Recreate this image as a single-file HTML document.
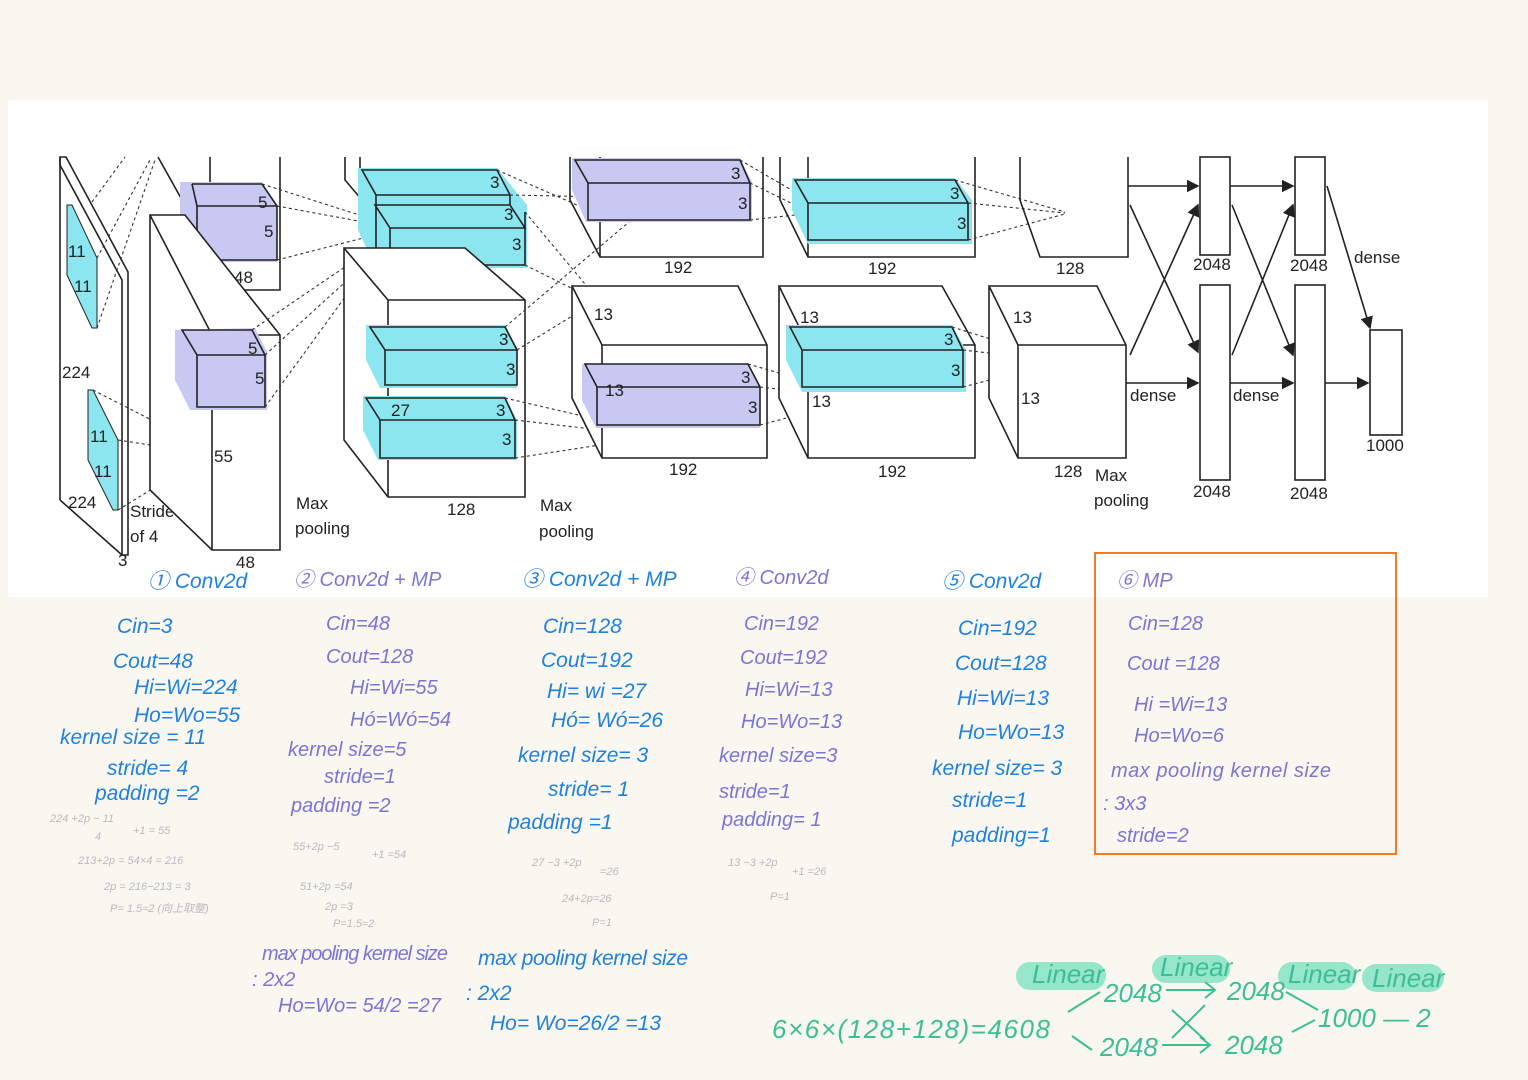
<!DOCTYPE html>
<html><head><meta charset="utf-8"><style>
html,body{margin:0;padding:0;background:#faf6f0;}
svg{display:block}
.k{stroke:#222;stroke-width:1.6;fill:none}
.kw{stroke:#222;stroke-width:1.6;fill:#fff}
.d{stroke:#333;stroke-width:1.1;stroke-dasharray:3 3;fill:none}
.t{font-family:"Liberation Sans",sans-serif;font-size:17px;fill:#222}
.h{font-family:"Liberation Sans","Noto Sans CJK SC",sans-serif;font-style:italic}
.b{fill:#1e82de;font-size:21px}
.p{fill:#7a76d6;font-size:20px}
.g{fill:#bdb8c0;font-size:11px}
.gr{fill:#3cbf95;font-size:26px}
.lv{fill:#c9c8f3}
.cy{fill:#8ce6f0}
</style></head><body>
<svg width="1528" height="1080" viewBox="0 0 1528 1080" xmlns="http://www.w3.org/2000/svg">
<defs><marker id="ar" markerWidth="8" markerHeight="8" refX="7" refY="4" orient="auto"><path d="M0,0 L8,4 L0,8 Z" fill="#222"/></marker></defs>
<rect x="8" y="100" width="1480" height="497" fill="#fff"/>

<polygon points="60,157 66,157 128,272 128,555 122,555 122,280 60,165" class="kw"/>
<line x1="60" y1="157" x2="60" y2="500" class="k"/>
<line x1="60" y1="500" x2="122" y2="555" class="k"/>
<polygon points="67,205 72,205 97,258 97,328 92,328 67,275" class="cy" stroke="#222"/>
<polygon points="88,390 93,390 118,440 118,510 113,510 88,460" class="cy" stroke="#222"/>
<text x="68" y="257" class="t">11</text><text x="74" y="292" class="t">11</text>
<text x="62" y="378" class="t">224</text><text x="68" y="508" class="t">224</text>
<text x="90" y="442" class="t">11</text><text x="94" y="477" class="t">11</text>
<text x="118" y="566" class="t">3</text>
<text x="130" y="517" class="t" font-size="19">Stride</text><text x="130" y="542" class="t" font-size="19">of 4</text>
<path d="M92,202 L125,157 M97,258 L150,160 M97,328 L155,160 M118,440 L215,455 M118,510 L212,452 M93,390 L210,450" class="d"/>

<path d="M158,157 L210,250 M210,157 L210,290 L280,290 L280,157" class="k"/>
<polygon points="180,182 262,182 277,206 277,262 197,262 180,235" class="lv"/>
<path d="M192,184 L262,184 L277,206 L197,206 L192,184 M197,206 L197,260 L277,260 L277,206" class="k"/>
<text x="258" y="208" class="t">5</text><text x="264" y="237" class="t">5</text><text x="234" y="283" class="t">48</text>
<text x="198" y="308" class="t">55</text>
<polygon points="150,215 185,215 280,335 280,550 212,550 150,490" class="kw"/>
<path d="M150,215 L212,335 L280,335 M212,335 L212,550" class="k"/>
<polygon points="175,330 255,328 267,352 267,410 190,410 175,380" class="lv"/>
<path d="M182,330 L252,330 L265,355 L197,355 Z M197,355 L197,407 L265,407 L265,355" class="k"/>
<text x="248" y="354" class="t">5</text><text x="255" y="384" class="t">5</text>
<text x="214" y="462" class="t">55</text><text x="236" y="568" class="t">48</text>
<path d="M262,184 L375,220 M277,206 L380,225 M277,260 L375,235 M252,330 L370,250 M265,355 L375,255 M265,407 L372,260" class="d"/>
<text x="296" y="509" class="t" font-size="19">Max</text><text x="295" y="534" class="t" font-size="19">pooling</text>

<path d="M345,157 L345,180 L362,200 M360,157 L360,170" class="k"/>
<polygon points="358,168 497,168 527,205 527,268 376,268 358,230" class="cy"/>
<path d="M362,170 L497,170 L510,195 L376,195 Z M376,195 L376,265 L525,265 L525,212 M375,205 L510,205 L525,228 L390,228 Z M390,228 L390,263 M510,195 L510,205" class="k"/>
<text x="490" y="188" class="t">3</text><text x="504" y="220" class="t">3</text><text x="512" y="250" class="t">3</text>
<text x="374" y="301" class="t">27</text><text x="432" y="293" class="t">128</text>
<polygon points="344,248 465,248 525,300 525,497 388,497 344,440" class="kw"/>
<path d="M344,248 L388,300 L525,300 M388,300 L388,497" class="k"/>
<polygon points="366,325 505,325 517,348 517,388 380,388 366,360" class="cy"/>
<path d="M370,327 L505,327 L517,350 L385,350 Z M385,350 L385,385 L517,385 L517,350" class="k"/>
<text x="499" y="345" class="t">3</text><text x="506" y="375" class="t">3</text>
<polygon points="363,396 505,396 517,420 517,460 378,460 363,430" class="cy"/>
<path d="M366,398 L505,398 L515,420 L380,420 Z M380,420 L380,458 L515,458 L515,420" class="k"/>
<text x="391" y="416" class="t">27</text><text x="496" y="416" class="t">3</text><text x="502" y="445" class="t">3</text>
<text x="447" y="515" class="t">128</text>
<text x="540" y="511" class="t" font-size="19">Max</text><text x="539" y="537" class="t" font-size="19">pooling</text>
<path d="M497,170 L600,215 M510,195 L655,198 M525,212 L590,290 M505,327 L655,200 M517,350 L598,300 M505,398 L600,420 M515,420 L600,430 M515,458 L600,445 M525,265 L720,362" class="d"/>

<path d="M570,157 L570,200 L600,257 L763,257 L763,157 M600,157 L600,257" class="k"/>
<polygon points="572,158 740,158 752,182 752,222 586,222 572,190" class="lv"/>
<path d="M575,160 L740,160 L750,183 L588,183 Z M588,183 L588,220 L750,220 L750,183" class="k"/>
<text x="731" y="179" class="t">3</text><text x="738" y="209" class="t">3</text>
<text x="664" y="273" class="t">192</text>
<polygon points="572,286 738,286 767,345 767,458 602,458 572,398" class="kw"/>
<path d="M572,286 L602,345 L767,345 M602,345 L602,458" class="k"/>
<polygon points="582,364 748,364 760,386 760,428 596,428 582,400" class="lv"/>
<path d="M585,364 L748,364 L760,387 L597,387 Z M597,387 L597,425 L760,425 L760,387" class="k"/>
<text x="594" y="320" class="t">13</text><text x="605" y="396" class="t">13</text>
<text x="741" y="383" class="t">3</text><text x="748" y="413" class="t">3</text>
<text x="669" y="475" class="t">192</text>
<path d="M740,160 L795,192 M750,183 L795,205 M750,220 L795,215 M748,364 L855,395 M760,387 L855,398 M760,425 L855,400" class="d"/>

<path d="M780,157 L780,200 L808,257 L975,257 L975,157 M808,157 L808,257" class="k"/>
<polygon points="792,178 955,178 972,200 972,244 808,244 792,210" class="cy"/>
<path d="M795,180 L955,180 L968,203 L808,203 Z M808,203 L808,240 L968,240 L968,203" class="k"/>
<text x="950" y="199" class="t">3</text><text x="957" y="229" class="t">3</text>
<text x="868" y="274" class="t">192</text>
<polygon points="779,286 942,286 975,345 975,458 808,458 779,398" class="kw"/>
<path d="M779,286 L808,345 L975,345 M808,345 L808,458" class="k"/>
<polygon points="786,325 952,325 966,350 966,392 802,392 786,360" class="cy"/>
<path d="M790,327 L952,327 L963,350 L802,350 Z M802,350 L802,387 L963,387 L963,350" class="k"/>
<text x="800" y="323" class="t">13</text><text x="944" y="345" class="t">3</text><text x="951" y="376" class="t">3</text>
<text x="812" y="407" class="t">13</text>
<text x="878" y="477" class="t">192</text>
<path d="M955,180 L1065,212 M968,203 L1065,213 M968,240 L1065,214 M952,327 L1058,360 M963,350 L1058,361 M963,387 L1058,362" class="d"/>

<path d="M1020,157 L1020,200 L1040,257 L1128,257 L1128,157" class="k"/>
<text x="1056" y="274" class="t">128</text>
<polygon points="989,286 1097,286 1126,345 1126,458 1018,458 989,398" class="kw"/>
<path d="M989,286 L1018,345 L1126,345 M1018,345 L1018,458" class="k"/>
<text x="1013" y="323" class="t">13</text><text x="1021" y="404" class="t">13</text>
<text x="1054" y="477" class="t">128</text>
<text x="1095" y="481" class="t" font-size="19">Max</text><text x="1094" y="506" class="t" font-size="19">pooling</text>

<rect x="1200" y="157" width="30" height="98" class="kw"/>
<rect x="1200" y="285" width="30" height="195" class="kw"/>
<rect x="1295" y="157" width="30" height="98" class="kw"/>
<rect x="1295" y="285" width="30" height="195" class="kw"/>
<rect x="1370" y="330" width="32" height="105" class="kw"/>
<g class="k" stroke-width="1.3" marker-end="url(#ar)">
<path d="M1128,186 L1198,186"/><path d="M1126,383 L1198,383"/><path d="M1230,186 L1293,186"/><path d="M1230,383 L1293,383"/><path d="M1325,383 L1368,383"/><path d="M1130,205 L1198,352"/><path d="M1130,355 L1198,205"/><path d="M1232,205 L1293,355"/><path d="M1232,355 L1293,205"/><path d="M1327,186 L1370,328"/>
</g>
<text x="1193" y="270" class="t">2048</text><text x="1290" y="271" class="t">2048</text>
<text x="1193" y="497" class="t">2048</text><text x="1290" y="499" class="t">2048</text>
<text x="1366" y="451" class="t">1000</text>
<text x="1354" y="263" class="t" font-size="19">dense</text>
<text x="1130" y="401" class="t" font-size="19">dense</text><text x="1233" y="401" class="t" font-size="19">dense</text>

<g class="h">
<text x="148" y="588" class="b">① Conv2d</text>
<text x="294" y="586" class="p">② Conv2d + MP</text>
<text x="522" y="586" class="b">③ Conv2d + MP</text>
<text x="734" y="584" class="p">④ Conv2d</text>
<text x="942" y="588" class="b">⑤ Conv2d</text>
<text x="1117" y="587" class="p">⑥ MP</text>

<text x="117" y="633" class="b">Cin=3</text>
<text x="113" y="668" class="b">Cout=48</text>
<text x="134" y="694" class="b">Hi=Wi=224</text>
<text x="134" y="722" class="b">Ho=Wo=55</text>
<text x="60" y="744" class="b">kernel size = 11</text>
<text x="107" y="775" class="b">stride= 4</text>
<text x="95" y="800" class="b">padding =2</text>
<text x="50" y="822" class="g">224 +2p − 11</text><text x="95" y="840" class="g">4</text><text x="133" y="834" class="g">+1 = 55</text>
<text x="78" y="864" class="g">213+2p = 54×4 = 216</text>
<text x="104" y="890" class="g">2p = 216−213 = 3</text>
<text x="110" y="912" class="g">P= 1.5≈2 (向上取整)</text>

<text x="326" y="630" class="p">Cin=48</text>
<text x="326" y="663" class="p">Cout=128</text>
<text x="350" y="694" class="p">Hi=Wi=55</text>
<text x="350" y="726" class="p">Hó=Wó=54</text>
<text x="288" y="756" class="p">kernel size=5</text>
<text x="324" y="783" class="p">stride=1</text>
<text x="291" y="812" class="p">padding =2</text>
<text x="293" y="850" class="g" font-size="13">55+2p −5</text><text x="372" y="858" class="g" font-size="13">+1 =54</text>
<text x="300" y="890" class="g">51+2p =54</text><text x="325" y="910" class="g">2p =3</text><text x="333" y="927" class="g">P=1.5≈2</text>

<text x="543" y="633" class="b">Cin=128</text>
<text x="541" y="667" class="b">Cout=192</text>
<text x="547" y="698" class="b">Hi= wi =27</text>
<text x="551" y="727" class="b">Hó= Wó=26</text>
<text x="518" y="762" class="b">kernel size= 3</text>
<text x="548" y="796" class="b">stride= 1</text>
<text x="508" y="829" class="b">padding =1</text>
<text x="532" y="866" class="g" font-size="13">27 −3 +2p</text><text x="600" y="875" class="g" font-size="13">=26</text>
<text x="562" y="902" class="g">24+2p=26</text><text x="592" y="926" class="g">P=1</text>

<text x="744" y="630" class="p">Cin=192</text>
<text x="740" y="664" class="p">Cout=192</text>
<text x="745" y="696" class="p">Hi=Wi=13</text>
<text x="741" y="728" class="p">Ho=Wo=13</text>
<text x="719" y="762" class="p">kernel size=3</text>
<text x="719" y="798" class="p">stride=1</text>
<text x="722" y="826" class="p">padding= 1</text>
<text x="728" y="866" class="g" font-size="13">13 −3 +2p</text><text x="792" y="875" class="g">+1 =26</text>
<text x="770" y="900" class="g">P=1</text>

<text x="958" y="635" class="b">Cin=192</text>
<text x="955" y="670" class="b">Cout=128</text>
<text x="957" y="705" class="b">Hi=Wi=13</text>
<text x="958" y="739" class="b">Ho=Wo=13</text>
<text x="932" y="775" class="b">kernel size= 3</text>
<text x="952" y="807" class="b">stride=1</text>
<text x="952" y="842" class="b">padding=1</text>

<text x="1128" y="630" class="p">Cin=128</text>
<text x="1127" y="670" class="p">Cout =128</text>
<text x="1134" y="711" class="p">Hi =Wi=13</text>
<text x="1134" y="742" class="p">Ho=Wo=6</text>
<text x="1111" y="777" class="p" textLength="220">max pooling kernel size</text>
<text x="1103" y="810" class="p">: 3x3</text>
<text x="1117" y="842" class="p">stride=2</text>

<text x="262" y="960" class="p" font-size="17" textLength="186">max pooling kernel size</text>
<text x="252" y="986" class="p" font-size="17">: 2x2</text>
<text x="278" y="1012" class="p" font-size="19">Ho=Wo= 54/2 =27</text>
<text x="478" y="965" class="b" font-size="17" textLength="210">max pooling kernel size</text>
<text x="466" y="1000" class="b" font-size="18">: 2x2</text>
<text x="490" y="1030" class="b" font-size="18">Ho= Wo=26/2 =13</text>

<rect x="1016" y="962" width="90" height="28" rx="14" fill="#96e6cc"/>
<rect x="1152" y="955" width="78" height="28" rx="14" fill="#96e6cc"/>
<rect x="1278" y="962" width="78" height="28" rx="14" fill="#96e6cc"/>
<rect x="1362" y="964" width="82" height="28" rx="14" fill="#96e6cc"/>
<text x="1032" y="983" class="gr" font-size="19" fill="#2fae84">Linear</text>
<text x="1160" y="976" class="gr" font-size="19" fill="#2fae84">Linear</text>
<text x="1288" y="983" class="gr" font-size="19" fill="#2fae84">Linear</text>
<text x="1372" y="987" class="gr" font-size="19" fill="#2fae84">Linear</text>
<text x="772" y="1038" class="gr" textLength="278">6×6×(128+128)=4608</text>
<text x="1104" y="1002" class="gr" font-size="24">2048</text>
<text x="1100" y="1056" class="gr" font-size="24">2048</text>
<text x="1227" y="1000" class="gr" font-size="24">2048</text>
<text x="1225" y="1054" class="gr" font-size="24">2048</text>
<text x="1318" y="1027" class="gr">1000 — 2</text>
</g>
<path d="M1068,1012 L1100,992 M1072,1036 L1092,1050 M1166,990 L1215,990 M1205,982 L1215,990 L1205,998 M1162,1045 L1210,1045 M1200,1037 L1210,1045 L1200,1053 M1172,1010 L1205,1040 M1172,1038 L1205,1005 M1286,992 L1318,1010 M1292,1032 L1315,1020" stroke="#3cbf95" stroke-width="2" fill="none"/>
<rect x="1095" y="553" width="301" height="301" fill="none" stroke="#ef7a2a" stroke-width="2"/>
</svg>
</body></html>
